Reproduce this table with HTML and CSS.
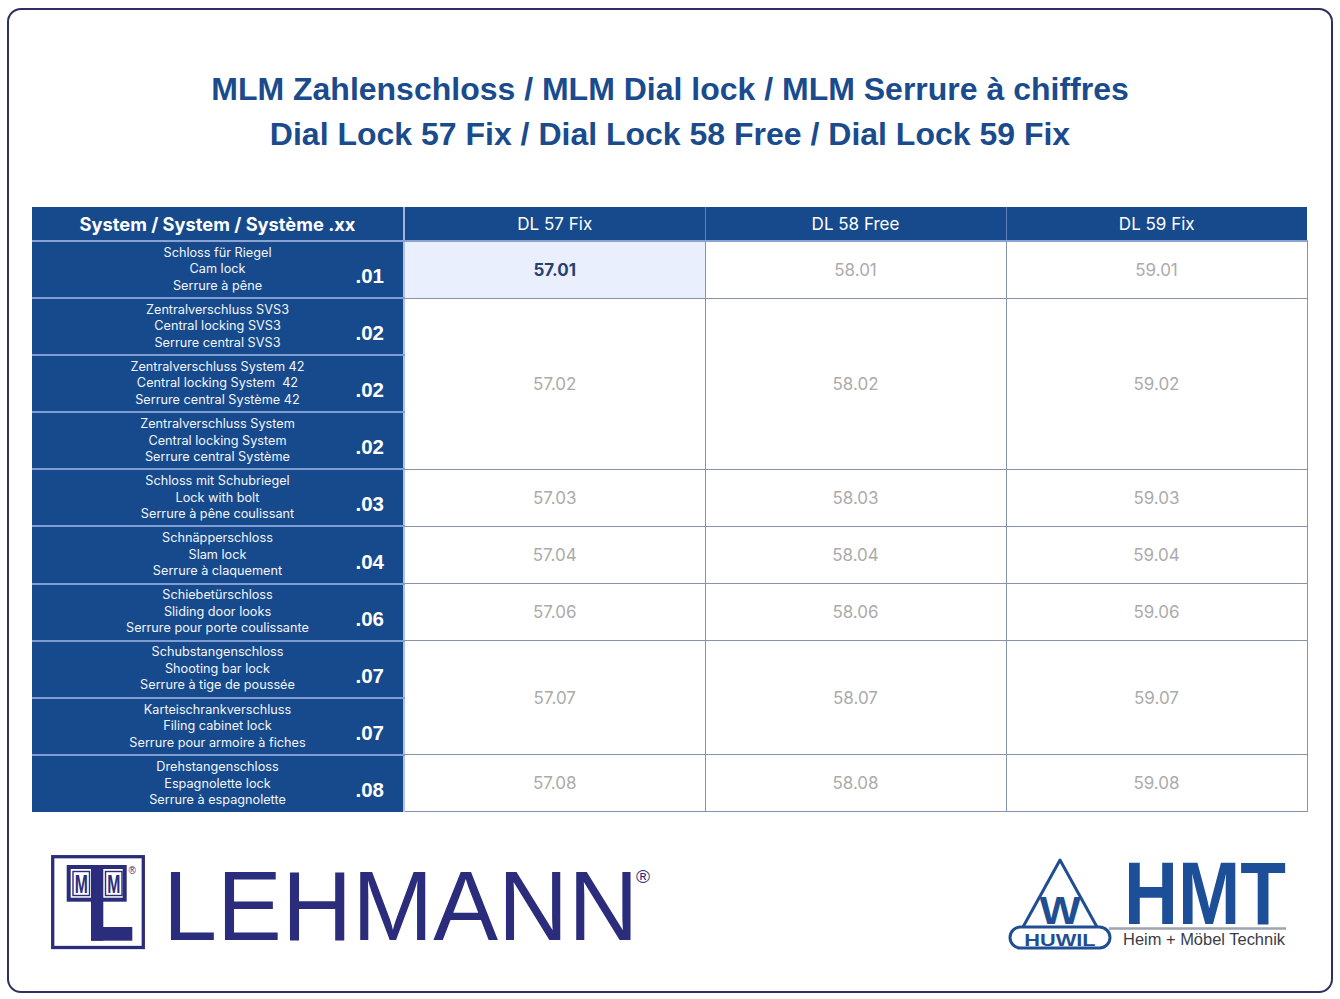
FILE: index.html
```html
<!DOCTYPE html>
<html lang="de">
<head>
<meta charset="utf-8">
<title>MLM Dial Lock</title>
<link rel="stylesheet" href="styles.css">
</head>
<body>
<div class="frame">
  <h1 class="title">
    <span class="title-line">MLM Zahlenschloss / MLM Dial lock / MLM Serrure à chiffres</span>
    <span class="title-line">Dial Lock 57 Fix / Dial Lock 58 Free / Dial Lock 59 Fix</span>
  </h1>

  <table class="grid">
    <colgroup>
      <col class="c-sys">
      <col class="c-val">
      <col class="c-val">
      <col class="c-val">
    </colgroup>
    <thead>
      <tr class="head-row">
        <th class="h-sys">System / System / Système .xx</th>
        <th class="h-val">DL 57 Fix</th>
        <th class="h-val">DL 58 Free</th>
        <th class="h-val">DL 59 Fix</th>
      </tr>
    </thead>
    <tbody>
      <tr>
        <th class="item"><div class="item-in"><span class="desc">Schloss für Riegel<br>Cam lock<br>Serrure à pêne</span><span class="code">.01</span></div></th>
        <td class="val hl">57.01</td>
        <td class="val">58.01</td>
        <td class="val">59.01</td>
      </tr>
      <tr>
        <th class="item"><div class="item-in"><span class="desc">Zentralverschluss SVS3<br>Central locking SVS3<br>Serrure central SVS3</span><span class="code">.02</span></div></th>
        <td class="val" rowspan="3">57.02</td>
        <td class="val" rowspan="3">58.02</td>
        <td class="val" rowspan="3">59.02</td>
      </tr>
      <tr>
        <th class="item"><div class="item-in"><span class="desc">Zentralverschluss System 42<br>Central locking System&nbsp; 42<br>Serrure central Système 42</span><span class="code">.02</span></div></th>
      </tr>
      <tr>
        <th class="item"><div class="item-in"><span class="desc">Zentralverschluss System<br>Central locking System<br>Serrure central Système</span><span class="code">.02</span></div></th>
      </tr>
      <tr>
        <th class="item"><div class="item-in"><span class="desc">Schloss mit Schubriegel<br>Lock with bolt<br>Serrure à pêne coulissant</span><span class="code">.03</span></div></th>
        <td class="val">57.03</td>
        <td class="val">58.03</td>
        <td class="val">59.03</td>
      </tr>
      <tr>
        <th class="item"><div class="item-in"><span class="desc">Schnäpperschloss<br>Slam lock<br>Serrure à claquement</span><span class="code">.04</span></div></th>
        <td class="val">57.04</td>
        <td class="val">58.04</td>
        <td class="val">59.04</td>
      </tr>
      <tr>
        <th class="item"><div class="item-in"><span class="desc">Schiebetürschloss<br>Sliding door looks<br>Serrure pour porte coulissante</span><span class="code">.06</span></div></th>
        <td class="val">57.06</td>
        <td class="val">58.06</td>
        <td class="val">59.06</td>
      </tr>
      <tr>
        <th class="item"><div class="item-in"><span class="desc">Schubstangenschloss<br>Shooting bar lock<br>Serrure à tige de poussée</span><span class="code">.07</span></div></th>
        <td class="val" rowspan="2">57.07</td>
        <td class="val" rowspan="2">58.07</td>
        <td class="val" rowspan="2">59.07</td>
      </tr>
      <tr>
        <th class="item"><div class="item-in"><span class="desc">Karteischrankverschluss<br>Filing cabinet lock<br>Serrure pour armoire à fiches</span><span class="code">.07</span></div></th>
      </tr>
      <tr>
        <th class="item"><div class="item-in"><span class="desc">Drehstangenschloss<br>Espagnolette lock<br>Serrure à espagnolette</span><span class="code">.08</span></div></th>
        <td class="val">57.08</td>
        <td class="val">58.08</td>
        <td class="val">59.08</td>
      </tr>
    </tbody>
  </table>

  <div class="logos">
    <svg class="logo-lehmann" width="612" height="126" viewBox="0 0 612 126" aria-label="MLM Lehmann">
      <g transform="translate(0,12)">
        <g fill="none" stroke="#2b2d7c">
          <rect x="2.7" y="2.7" width="90.6" height="90.8" stroke-width="3.3"/>
          <rect x="18.7" y="13" width="56" height="32.7" stroke-width="4"/>
          <rect x="23" y="17.5" width="16.5" height="24" stroke-width="1.4"/>
          <rect x="55.5" y="17.5" width="16.5" height="24" stroke-width="1.4"/>
        </g>
        <g fill="#2b2d7c">
          <rect x="41" y="11" width="12.3" height="75.7"/>
          <rect x="41" y="73" width="41.3" height="13.7"/>
          <text class="lg-m" transform="translate(31.2,38.8) scale(0.63,1)" text-anchor="middle">M</text>
          <text class="lg-m" transform="translate(63.7,38.8) scale(0.63,1)" text-anchor="middle">M</text>
          <text class="lg-r" x="78.5" y="20">®</text>
          <text class="lg-word" transform="translate(113,86) scale(1.013,1.02)">LEHMANN</text>
          <text class="lg-r2" x="586" y="29">®</text>
        </g>
      </g>
    </svg>

    <svg class="logo-hmt" width="290" height="112" viewBox="0 0 290 112" aria-label="HUWIL HMT Heim + Möbel Technik">
      <g transform="translate(0,12)">
        <g fill="none" stroke="#214e92" stroke-width="3" stroke-linejoin="round">
          <path d="M19 73 L56 6 L93 73"/>
          <rect x="6" y="73" width="100" height="21" rx="10.5"/>
        </g>
        <g fill="#214e92">
          <text class="hw-w" transform="translate(56,69.5) scale(1.15,1)" text-anchor="middle">W</text>
          <text class="hw-huwil" transform="translate(56,91.5) scale(1.32,1)" text-anchor="middle">HUWIL</text>
        </g>
        <text class="hmt" transform="translate(120,69.7) scale(0.845,1)">HMT</text>
        <line x1="105" y1="74.5" x2="282" y2="74.5" stroke="#9ea3b0" stroke-width="2.5"/>
        <text class="hmt-sub" transform="translate(119,91) scale(1.01,1)">Heim + Möbel Technik</text>
      </g>
    </svg>
  </div>
</div>
</body>
</html>
```

FILE: styles.css
```css
html, body {
  margin: 0;
  padding: 0;
  background: #ffffff;
}

.frame {
  box-sizing: border-box;
  margin: 8px 7px 0 7px;
  width: 1326px;
  height: 985px;
  border: 2px solid #2f2f60;
  border-radius: 14px;
  padding: 0 23px;
}

.title {
  margin: 57px 0 0 0;
  display: flex;
  flex-direction: column;
  align-items: center;
  font-family: "Liberation Sans", Arial, sans-serif;
  font-weight: bold;
  font-size: 32px;
  line-height: 45px;
  color: #1a4b8c;
}

.grid {
  margin-top: 50px;
  width: 1275px;
  border-collapse: collapse;
  table-layout: fixed;
  font-family: Inter, "Noto Sans", sans-serif;
}

.c-sys { width: 372px; }
.c-val { width: 301px; }

.grid th,
.grid td {
  padding: 0;
}

.head-row {
  height: 34px;
}

.head-row th {
  background: #174a8c;
  color: #ffffff;
  font-size: 17px;
  font-weight: 400;
  text-align: center;
  border-bottom: 2px solid #8aa3d3;
  border-right: 1px solid #5f80b8;
}

.head-row .h-sys {
  font-weight: 700;
  font-size: 18.3px;
  border-right: 2px solid #9fb2dc;
}

.head-row th:last-child {
  border-right: none;
}

.grid tbody tr {
  height: 57.1px;
}

.item {
  background: #174a8c;
  color: #f2f5fb;
  border-bottom: 2px solid #7f9dd1;
  border-right: 2px solid #b3c2e6;
  font-weight: 400;
}

.grid tbody tr:last-child .item {
  border-bottom: none;
}

.item-in {
  height: 55px;
  display: grid;
  grid-template-columns: 1fr auto 1fr;
}

.desc {
  grid-column: 2;
  align-self: center;
  text-align: center;
  font-size: 12.7px;
  line-height: 16.5px;
  white-space: nowrap;
}

.code {
  grid-column: 3;
  justify-self: end;
  align-self: end;
  padding: 0 19px 11px 0;
  font-family: "Liberation Sans", Arial, sans-serif;
  font-weight: bold;
  font-size: 20.5px;
  line-height: 20px;
  color: #ffffff;
}

.val {
  text-align: center;
  vertical-align: middle;
  font-size: 17px;
  color: #ababab;
  background: #ffffff;
  border: 1px solid #8793ab;
}

.val.hl {
  background: #e9effd;
  color: #283f6e;
  font-weight: 700;
}

.logos {
  margin-top: 30px;
  display: flex;
  justify-content: space-between;
  align-items: flex-start;
  padding: 0 14px 0 18px;
}

.logo-lehmann {
  display: block;
}

.logo-hmt {
  display: block;
}

.lg-m {
  font-family: "Liberation Sans", Arial, sans-serif;
  font-weight: bold;
  font-size: 25px;
}

.lg-r {
  font-family: "Liberation Sans", Arial, sans-serif;
  font-size: 10px;
}

.lg-word {
  font-family: "Liberation Sans", Arial, sans-serif;
  font-size: 96px;
}

.lg-r2 {
  font-family: "Liberation Sans", Arial, sans-serif;
  font-size: 19px;
}

.hw-w {
  font-family: "Liberation Sans", Arial, sans-serif;
  font-weight: bold;
  font-size: 38px;
}

.hw-huwil {
  font-family: "Liberation Sans", Arial, sans-serif;
  font-weight: bold;
  font-size: 16.5px;
}

.hmt {
  font-family: "Liberation Sans", Arial, sans-serif;
  font-weight: bold;
  font-size: 88.5px;
  fill: #1d4f98;
}

.hmt-sub {
  font-family: "Liberation Sans", Arial, sans-serif;
  font-size: 16.3px;
  fill: #3a3d48;
}
```
